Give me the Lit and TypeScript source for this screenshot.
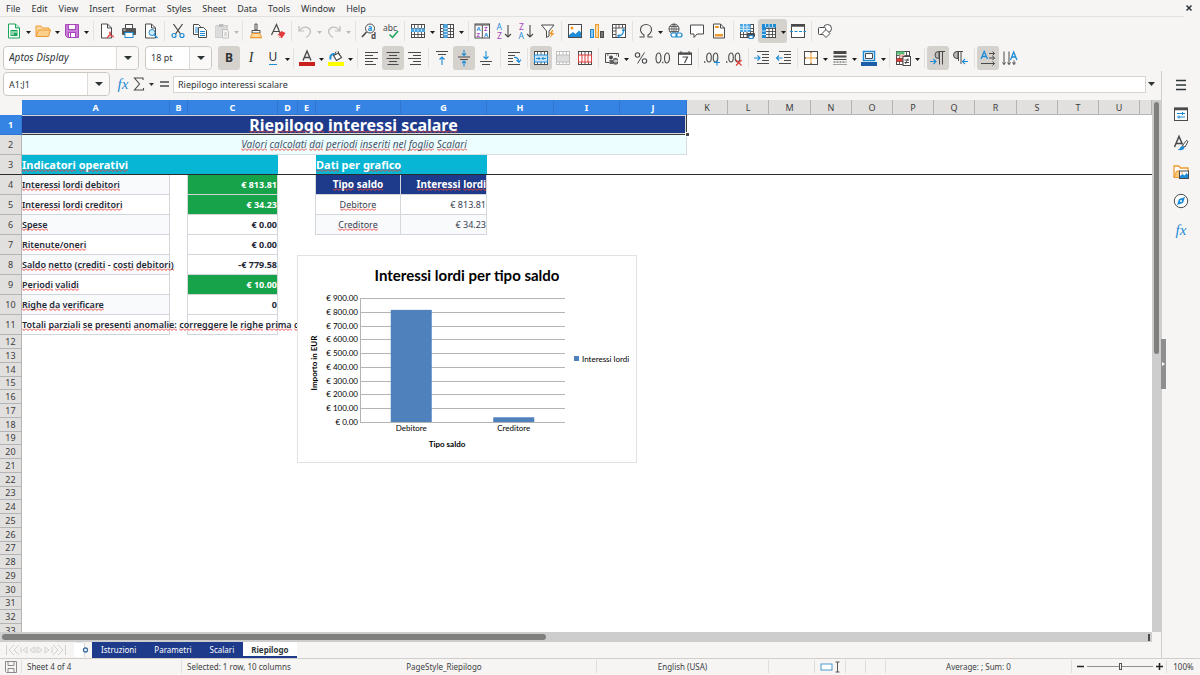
import { LitElement, html, svg, css, nothing, TemplateResult } from "lit";
import { customElement, property } from "lit/decorators.js";
import { classMap } from "lit/directives/class-map.js";

const K = "#4a4a4a";
const B = "#1e8bd6";
const G = "#18a558";
const O = "#ee9a2e";
const P = "#a845bd";
const R = "#e23b3b";
const L = "#bdbdbd";

const lines = (xs: string, color = K, width = 1) =>
  svg`<path d=${xs} fill="none" stroke=${color} stroke-width=${width} />`;

const grid = (color = K) => svg`
  <rect x="1.5" y="1.5" width="13" height="13" fill="#fff" stroke=${color} />
  <path d="M1.5 5.5h13M1.5 8.5h13M1.5 11.5h13M4.5 1.5v13M8 1.5v13M11.5 1.5v13" fill="none" stroke=${color} stroke-width=".9" />`;

const glyph = (t: string, x: number, y: number, size: number, color = K, weight = 400, family = "Noto Sans") =>
  svg`<text x=${x} y=${y} font-size=${size} fill=${color} font-weight=${weight} font-family=${family}>${t}</text>`;

const icons: Record<string, TemplateResult | unknown> = {
  new: svg`<path d="M2.5 1h7l4 4v10h-11z" fill="#fff" stroke=${G}/><path d="M9.5 1v4h4" fill="#bfe8cd" stroke=${G}/>
    <rect x="4.5" y="7" width="7" height="6" fill=${G}/><path d="M5 9h6M5 11h3" stroke="#fff"/>`,
  open: svg`<path d="M1 13V3h5l1.5 2H14v2" fill="#fbd9a0" stroke=${O}/><path d="M1 13.5 3.5 7H15.5L13.5 13.5z" fill="#fbd08c" stroke=${O}/>`,
  save: svg`<path d="M1.5 1.5h13v13h-11l-2-2z" fill="#c77fd6" stroke=${P}/><rect x="4.5" y="1.5" width="7" height="5" fill="#fff" stroke=${P}/>
    <rect x="4.5" y="9.5" width="7" height="5" fill="#fff" stroke=${P}/><path d="M6.500 10v4" stroke=${P}/>`,
  pdf: svg`<path d="M2.500 1h6l4 4v10h-10z" fill="#fff" stroke=${K}/><path d="M8.500 1v4h4" fill="none" stroke=${K}/>
    <path d="M8 15c2-2 3-4 3-6.500M11 9c0 3 1.500 5 4 5M8.500 13.500c2-1 4-1 6-.5" fill="none" stroke=${R}/>`,
  print: svg`<rect x="4.500" y="1.500" width="7" height="4" fill="#fff" stroke=${K}/><rect x="1" y="5" width="14" height="7" rx="1" fill="#555"/>
    <rect x="2.500" y="6.500" width="2" height="1" fill="#fff"/><rect x="4" y="9.500" width="8" height="5" fill="#fff" stroke=${B}/>`,
  preview: svg`<path d="M2.500 1h6l4 4v10h-10z" fill="#fff" stroke=${K}/><path d="M8.500 1v4h4" fill="none" stroke=${K}/>
    <circle cx="9" cy="9.500" r="3" fill="#d3eafa" stroke=${B}/><path d="m11.200 11.700 3.300 3.300" stroke=${B} stroke-width="1.400"/>`,
  cut: svg`<path d="M3.500 1 10.500 11M12.500 1 5.500 11" stroke=${K} stroke-width="1.300" fill="none"/>
    <circle cx="4" cy="12.500" r="2" fill="none" stroke=${B} stroke-width="1.200"/><circle cx="12" cy="12.500" r="2" fill="none" stroke=${B} stroke-width="1.200"/>`,
  copy: svg`<path d="M1.500 1.500h5l2 2v8h-7z" fill="#fff" stroke=${K}/><path d="M3 5h3M3 7h3M3 9h3" stroke=${B}/>
    <path d="M6.500 4.500h5l3 3v7h-8z" fill="#fff" stroke=${K}/><path d="M8 8.500h5M8 10.500h5M8 12.500h5" stroke=${B}/>`,
  paste: svg`<path d="M2 2.500h11v5M2 2.500v12h5" fill="none" stroke=${L} stroke-width="1.200"/><rect x="2" y="2.500" width="10" height="12" fill="#dcdcdc"/>
    <rect x="5" y="1" width="4.500" height="3" fill=${L}/><path d="M8.500 6.500h4l2 2v6.500h-6z" fill="#f6f5f4" stroke=${L}/><path d="M10 10h3M10 12h3" stroke=${L}/>`,
  brush: svg`<path d="M7 1h2v6H7z" fill="#fff" stroke=${K}/><path d="M4 7.500h8v2.500H4z" fill="#fff" stroke=${K}/>
    <path d="M4 10.500 2.500 14.500h11L12 10.500z" fill="#fbd9a0" stroke=${O}/><path d="M2 14.800h12" stroke=${O}/>`,
  clear: svg`<path d="M1.500 12 6.500 1.500 10 10M3 8.500h6" fill="none" stroke=${K} stroke-width="1.200"/>
    <path d="m7.500 12 4-4 4 2-3.500 5h-2z" fill=${R}/><path d="m8 12 3 2.500" stroke="#fff"/>`,
  undo: lines("M2 3v5h5M2.500 7.500C5 3.500 10 3 12.500 6S12 13 9 14.500", L, 1.2),
  redo: lines("M14 3v5H9M13.500 7.500C11 3.500 6 3 3.500 6S4 13 7 14.500", L, 1.2),
  find: svg`<circle cx="9" cy="5.500" r="4.500" fill="#fff" stroke=${K}/><path d="M5.500 9 1 14" stroke=${K} stroke-width="1.600"/>
    ${glyph("a", 6.5, 8, 8, B, 700)}${glyph("d", 10, 15.5, 8, K, 700)}`,
  spell: svg`${glyph("abc", 0, 7.500, 8.500)}<path d="m6.500 11.500 3 3L15 8" fill="none" stroke=${G} stroke-width="1.500"/>`,
  row: svg`${grid()}<rect x="1" y="5.500" width="14" height="3.500" fill="#4ba6e3"/><path d="M4.500 5.500v3M8 5.500v3M11.500 5.500v3" stroke="#bfe0f6"/>`,
  col: svg`${grid()}<rect x="4.500" y="1" width="4" height="14" fill="#4ba6e3"/><path d="M4.500 5.500h4M4.500 8.500h4M4.500 11.500h4" stroke="#bfe0f6"/>`,
  sort: svg`<rect x="1" y="1" width="14.500" height="14" fill="#fff" stroke=${K}/><path d="M1 2h14.500M8.300 2v13" stroke=${K}/>
    ${glyph("A", 2.500, 8, 6, B, 700)}${glyph("Z", 2.500, 14, 6, P, 700)}${glyph("Z", 10, 8, 6, P, 700)}${glyph("A", 10, 14, 6, B, 700)}`,
  az: svg`${glyph("A", 0.500, 7, 8.500, B)}${glyph("Z", 1, 15.500, 8.500, P)}${lines("M12 2v12M9 11l3 3 3-3", K, 1.1)}`,
  za: svg`${glyph("Z", 1, 7, 8.500, P)}${glyph("A", 0.500, 15.500, 8.500, B)}${lines("M12 2v12M9 11l3 3 3-3", K, 1.1)}`,
  filter: svg`<path d="M1.500 2h12.500L9 8v5l-2.500 1.500V8z" fill="#fff" stroke=${K}/><path d="m12 7-3 4.500h2.500L9.500 15.500 14.500 10H12L13.500 7z" fill=${O}/>`,
  image: svg`<rect x="1.500" y="1.500" width="13" height="13" fill="#fff" stroke=${K}/><circle cx="5" cy="5" r="1.500" fill=${O}/>
    <path d="M2 14v-2l4-3 2.500 2L12 7.500l2 2V14z" fill=${B}/>`,
  chart: svg`<rect x="1.500" y="6.500" width="3" height="8" fill="#8cc6ee" stroke=${B}/><rect x="6.500" y="1.500" width="3" height="13" fill="#fbd9a0" stroke=${O}/>
    <rect x="11.500" y="8.500" width="3" height="6" fill="#777" stroke=${K}/>`,
  pivot: svg`<rect x="1.500" y="1.500" width="13" height="13" fill="#fff" stroke=${K}/><path d="M1.500 5h13M5 1.500v13M8 1.500V5M11.500 1.500V5M1.500 8H5M1.500 11.500H5" stroke=${K} stroke-width=".9"/>
    <path d="M7 13c4 0 5.500-2 5.500-6M11 8l1.500-1.800L14 8M8.500 11.500 6.800 13l1.700 1.500" fill="none" stroke=${B} stroke-width="1.100"/>`,
  omega: lines("M1.500 14H6v-2C3.500 10.500 2.500 9 2.500 6.500 2.500 3.500 5 1.500 8 1.500s5.500 2 5.500 5c0 2.500-1 4-3.500 5.500v2h4.500", K, 1.1),
  link: svg`<circle cx="7" cy="6" r="5" fill="#fff" stroke=${K}/><path d="M2 6h10M7 1v10M3 3.500h8M3 8.500h8M7 1C4 4 4 8 7 11M7 1c3 3 3 7 0 10" fill="none" stroke=${K} stroke-width=".8"/>
    <rect x="4" y="10" width="6" height="4" rx="2" fill="#fff" stroke=${B} stroke-width="1.200"/><rect x="9" y="10" width="6" height="4" rx="2" fill="none" stroke=${B} stroke-width="1.200"/>`,
  comment: svg`<path d="M1.500 2h13v9H8l-3 3.500V11H1.500z" fill="#fff" stroke=${K}/>`,
  headfoot: svg`<path d="M2.500 1h7l4 4v10h-11z" fill="#fff" stroke=${K}/><path d="M4 3h4v2H4zM4 11h8v2.500H4z" fill=${O}/><path d="M9.500 1v4h4" fill="none" stroke=${K}/>`,
  printarea: svg`${grid()}<rect x="1" y="1" width="10.500" height="8" fill="#4ba6e3"/><path d="M1 4h10.500M1 6.500h10.500M4.500 1v8M8 1v8" stroke="#d0e8f8"/>
    <rect x="8" y="10" width="8" height="4" rx="1" fill=${K}/><rect x="10" y="12.500" width="4" height="3" fill="#fff" stroke=${B}/>`,
  freeze: svg`${grid()}<path d="M1 1h14v3.500H5V15H1z" fill=${B}/><path d="M8 1v3.500M11.500 1v3.500M1 8h4M1 11.500h4M4.500 1v3" stroke="#bfe0f6"/>`,
  split: svg`<rect x="1.500" y="1.500" width="13" height="13" fill="#fff" stroke=${K}/><path d="M1 2.500h14" stroke=${K} stroke-width="2.500"/>
    <path d="M0 8.500h16" stroke=${B} stroke-dasharray="3 1.500"/>`,
  shapes: svg`<circle cx="10.500" cy="5.500" r="4" fill="#fff" stroke=${K}/><rect x="1.500" y="4.500" width="7" height="7" rx="1" fill="#fff" stroke=${K}/>
    <path d="m9 6.500 4 4-4 4-4-4z" fill="#fff" stroke=${K}/>`,
  left: lines("M2 2.500h13M2 5.500h8M2 8.500h13M2 11.500h8M2 14.500h11"),
  center: lines("M1.500 2.500h13M4 5.500h8M1.500 8.500h13M4 11.500h8M2.500 14.500h11"),
  right: lines("M1 2.500h13M6 5.500h8M1 8.500h13M6 11.500h8M3 14.500h11"),
  top: svg`${lines("M2 1.500h12M4 4.500h8")}${lines("M8 15V7M5.500 9.500 8 7l2.500 2.500", B, 1.1)}`,
  middle: svg`${lines("M2 7h12M4 9.500h8")}${lines("M8 0v5.500M6 3.500l2 2 2-2M8 16.500V11M6 13l2-2 2 2", B, 1.1)}`,
  bottom: svg`${lines("M2 11.500h12M4 14.500h8")}${lines("M8 1v8M5.500 6.500 8 9l2.500-2.500", B, 1.1)}`,
  wrap: svg`${lines("M2 2.500h12M2 5.500h7M2 8.500h5M2 11.500h5M2 14.500h12")}${lines("M8 7.500c3-.5 4.500 1.500 5 4M10.500 10l2.500 2.500L15 9.500", B, 1.1)}`,
  merge: svg`${grid()}<rect x="1.500" y="5" width="13" height="7" fill="#c9e4f8" stroke=${B}/><path d="M3 8.500h4M13 8.500H9M5.500 7 7 8.500 5.500 10M10.500 7 9 8.500l1.500 1.500" fill="none" stroke=${B}/>`,
  mergec: svg`${grid(L)}<rect x="1.500" y="5" width="13" height="7" fill="#ddd" stroke=${L}/>`,
  unmerge: svg`${grid()}<rect x="1.500" y="5" width="13" height="7" fill="#fff" stroke=${R}/><path d="M5 5v7M8 5v7M11 5v7" stroke=${R}/>`,
  currency: svg`<path d="M1.500 3.500h13V7M1.500 3.500v9h4" fill="none" stroke=${K}/><circle cx="7" cy="7.500" r="2" fill=${K}/><path d="M3 5h1.500M12 5h1" stroke=${K}/>
    <rect x="5.500" y="10" width="3.500" height="4" fill="#666"/><rect x="9.500" y="8.500" width="4" height="5.500" rx="1" fill="#888" stroke=${K}/><path d="M9.500 11h5" stroke="#fff"/>`,
  percent: svg`<circle cx="4.500" cy="5" r="2.200" fill="none" stroke=${K} stroke-width="1.100"/><circle cx="11.500" cy="11" r="2.200" fill="none" stroke=${K} stroke-width="1.100"/><path d="M11.500 2.500 4.500 13.500" stroke=${K}/>`,
  number: svg`<ellipse cx="3.500" cy="8" rx="2.500" ry="5" fill="none" stroke=${K} stroke-width="1.100"/><ellipse cx="12" cy="8" rx="2.500" ry="5" fill="none" stroke=${K} stroke-width="1.100"/><path d="M7.200 12.500h1.200" stroke=${K} stroke-width="1.300"/>`,
  date: svg`<rect x="1.500" y="3" width="13" height="11.500" fill="#fff" stroke=${K}/><path d="M1 3.800h14" stroke=${K} stroke-width="2"/><path d="M4 1v2M12 1v2" stroke=${K}/>${lines("M5.500 7h5l-3 6", K, 1.2)}`,
  adddec: svg`<ellipse cx="5" cy="7.500" rx="2.300" ry="4.500" fill="none" stroke=${K} stroke-width="1.100"/><ellipse cx="11.500" cy="7.500" rx="2.300" ry="4.500" fill="none" stroke=${K} stroke-width="1.100"/><path d="M0 12h1.400" stroke=${K} stroke-width="1.300"/><path d="M13 9.500v6M10 12.500h6" stroke=${B} stroke-width="1.200"/>`,
  deldec: svg`<ellipse cx="5" cy="7.500" rx="2.300" ry="4.500" fill="none" stroke=${K} stroke-width="1.100"/><ellipse cx="11.500" cy="7.500" rx="2.300" ry="4.500" fill="none" stroke=${K} stroke-width="1.100"/><path d="M0 12h1.400" stroke=${K} stroke-width="1.300"/><path d="m10 10 5.500 5.500M15.500 10 10 15.500" stroke=${R} stroke-width="1.200"/>`,
  indent: svg`${lines("M3 1.500h12M8 4.500h7M8 7.500h7M8 10.500h7M3 13.500h12")}${lines("M0 8h6M3.500 5.500 6 8l-2.500 2.500", B, 1.1)}`,
  outdent: svg`${lines("M3 1.500h12M8 4.500h7M8 7.500h7M8 10.500h7M3 13.500h12")}${lines("M6.500 8h-6M3 5.500.5 8 3 10.500", B, 1.1)}`,
  borders: svg`<rect x="1.500" y="1.500" width="13" height="13" fill="#fff" stroke=${K}/><path d="M8 2v12M2 8h12" stroke=${O}/><path d="M8 1v2M8 13v2M1 8h2M13 8h2" stroke=${K}/>`,
  linestyle: svg`<path d="M1.500 2.500h13" stroke=${K} stroke-width="3"/><path d="M1.500 6.500h13" stroke=${K} stroke-width="2"/><path d="M1.500 9.500h13" stroke=${K}/><path d="M1.500 12h13" stroke=${K} stroke-dasharray="2 1"/><path d="M1.500 14.500h13" stroke=${K} stroke-dasharray="1 1"/>`,
  bordercolor: svg`<rect x="2.500" y="1.500" width="11" height="9" fill="#fff" stroke=${B} stroke-width="1.500"/><path d="M4.500 3.500h7v5h-7z" fill="none" stroke=${K}/><rect x="0" y="12" width="16" height="4" fill="#1b5fa6"/>`,
  cond: svg`${grid()}<path d="M1.500 1.500h8v3h-8z" fill="#57c27a"/><path d="M1.500 8.500h6v3h-6z" fill=${R}/><path d="M4.500 4.500h5v3h-5z" fill="#f3b3a8"/><rect x="8" y="6.500" width="7.500" height="9" fill="#fff" stroke=${K}/><path d="M9.500 10h4.500M9.500 12.500h4.500M13 8.500l-2.500 5.500" stroke=${K}/>`,
  ltr: svg`<path d="M15 1.500H8.500a3.500 3.500 0 0 0 0 7H9V1.500" fill="#b9b9b9" stroke=${K}/><path d="M9.500 1.500v13M12.500 1.500v13" stroke=${K}/>${lines("M0 11.500h6M3.500 9 6 11.500 3.500 14", B, 1.1)}`,
  rtl: svg`<path d="M11 1.500H5a3.500 3.500 0 0 0 0 7h1V1.500" fill="#b9b9b9" stroke=${K}/><path d="M6.500 1.500v9.500M9 1.500V14" stroke=${K}/>${lines("M16 11.500h-5.500M13 9l-2.500 2.500L13 14", B, 1.1)}`,
  horiz: svg`${lines("M1 9 4.200 1.500 7.500 9M2.200 6.500h4", B, 1.3)}${lines("M9 3.500h5.500M12.500 1.500l2 2-2 2M9 8h5.500M12.500 6l2 2-2 2M1 13.500h13.500M12.500 11.500l2 2-2 2")}`,
  vert: svg`${lines("M8.500 10 11.700 2l3.200 8M9.700 7h4", B, 1.3)}${lines("M2 1.500v13M.5 12.500l1.500 2 1.500-2M7 1.500v13M5.500 12.500l1.500 2 1.500-2M12 10.500v4M10.500 12.500l1.500 2 1.500-2")}`,
  fontcolor: svg`${lines("M4 10.500 8 1l4 9.500M5.200 7.500h5.600", K, 1.4)}<rect x="0" y="12" width="16" height="4" fill="#c9211e"/>`,
  fill: svg`<path d="m5.500 5.500 5-2.500 3 4.500-5 3z" fill="#fff" stroke=${K} stroke-width="1.200"/><path d="M10 1 11.500 5.500M8 1.500 6.500 5" stroke=${K}/><path d="M2.500 9.500C2 6 3 3.500 6.500 4" fill="none" stroke=${B} stroke-width="2"/><rect x="0" y="12" width="16" height="4" fill="#ffff00"/>`,
  sigma: lines("M12 4V2H3.500L8.500 8l-5 6H12.500v-2", K, 1.1),
  equals: lines("M4 6h9M4 10h9", K, 1.5),
  burger: lines("M3 3.500h10M3 8h10M3 12.500h10", "#2e3436", 1.6),
  props: svg`<rect x="1.500" y="2" width="13" height="12.500" fill="#fff" stroke=${K}/><path d="M1 3h14" stroke=${K} stroke-width="2.500"/>${lines("M4 7.500h8M9.500 6v3M4 11h8M6 9.500v3", B, 1.1)}`,
  styles: svg`${lines("M1.500 12 6 1.500 9.500 9.500M3 8.500h6", K, 1.5)}<path d="m9.500 10.500 4-5 1.500 1-3 5.500z" fill="#fff" stroke=${K}/><path d="M4.500 14.500c3 0 2-3 5-3.500l2 1.500c-.5 2.500-4 3.500-7 2z" fill=${B}/>`,
  gallery: svg`<path d="M1 13.500V2h5l1.500 2H15v3" fill="#fff" stroke=${O} stroke-width="1.300"/><path d="M1 13.500 3.500 7H7v6.500z" fill="#f9c77c" stroke=${O}/><rect x="6.500" y="7" width="9" height="7.500" fill="#fff" stroke=${K}/><path d="M7 14v-2l2.500-2 2 1.500L13.500 9l1.500 1.500V14z" fill=${B}/><circle cx="9" cy="9" r=".8" fill=${O}/>`,
  nav: svg`<circle cx="8" cy="8" r="6.700" fill="#fff" stroke=${K}/><path d="m12 4-2 6-6 2 2-6z" fill=${B}/><circle cx="8" cy="8" r="1" fill="#fff"/>`,
  docmod: svg`<path d="M2.500 2.500h11v11h-10l-1-1z" fill="none" stroke="#8a8a8a"/><path d="M5 2.500v4h6v-4M5 13.500v-4h6v4" fill="none" stroke="#8a8a8a"/>`,
  selmode: svg`<rect x="1" y="4" width="11" height="6" fill="#fff" stroke="#4a98cf"/>${lines("M15.500 2h4M17.500 2v10M15.500 12h4", "#555")}`,
  addtab: svg`<path d="M2.500 0h8v14" fill="#fff" stroke="#d8d8d8"/><path d="M0 0h10v14H0z" fill="#fff"/><circle cx="11.500" cy="7" r="2" fill="#fff" stroke="#3a6ea5" stroke-width="1.300"/>`,
};

const icon = (name: string, w = 16, h = 16) =>
  html`<svg width=${w} height=${h} viewBox="0 0 ${w} ${h}" aria-hidden="true">${icons[name]}</svg>`;

const caret = (w = 5, h = 3) =>
  html`<svg class="caret" width=${w} height=${h} viewBox="0 0 ${w} ${h}" aria-hidden="true"><path d="M0 0h${w}L${w / 2} ${h}z" fill="currentColor" /></svg>`;

const chrome = css`
  * { box-sizing: border-box; }
  button, input { font: inherit; color: inherit; border: 0; background: none; padding: 0; margin: 0; min-width: 0; }
  svg { display: block; overflow: visible; flex: none; }
`;

type Item = [name: string, label: string, flag?: "on" | "drop" | "ondrop" | "off" | "offdrop"] | "|" | "||";

const standardBar: Item[] = [
  ["new", "New", "drop"], ["open", "Open", "drop"], ["save", "Save", "drop"], "||",
  ["pdf", "Export as PDF"], ["print", "Print"], ["preview", "Print preview"], "|",
  ["cut", "Cut"], ["copy", "Copy"], ["paste", "Paste", "offdrop"], "|",
  ["brush", "Clone formatting"], ["clear", "Clear formatting"], "|",
  ["undo", "Undo", "offdrop"], ["redo", "Redo", "offdrop"], "||",
  ["find", "Find and replace"], ["spell", "Spelling"], "|",
  ["row", "Row", "drop"], ["col", "Column", "drop"], "||",
  ["sort", "Sort"], ["az", "Sort ascending"], ["za", "Sort descending"], ["filter", "AutoFilter"], "|",
  ["image", "Insert image"], ["chart", "Insert chart"], ["pivot", "Pivot table"], "|",
  ["omega", "Special character", "drop"], ["link", "Hyperlink"], ["comment", "Comment"], ["headfoot", "Headers and footers"], "||",
  ["printarea", "Print area"], ["freeze", "Freeze rows and columns", "ondrop"], ["split", "Split window"], "|",
  ["shapes", "Draw functions"],
];

const formatBar: Item[] = [
  ["bold", "Bold", "on"], ["italic", "Italic"], ["underline", "Underline", "drop"], "|",
  ["fontcolor", "Font color", "drop"], ["fill", "Background color", "drop"], "||",
  ["left", "Align left"], ["center", "Align center", "on"], ["right", "Align right"], "|",
  ["top", "Align top"], ["middle", "Center vertically", "on"], ["bottom", "Align bottom"], "||",
  ["wrap", "Wrap text"], "|",
  ["merge", "Merge and center", "on"], ["mergec", "Merge cells", "off"], ["unmerge", "Unmerge cells"], "|",
  ["currency", "Currency", "drop"], ["percent", "Percent"], ["number", "Number"], ["date", "Date"], "|",
  ["adddec", "Add decimal place"], ["deldec", "Delete decimal place"], "||",
  ["indent", "Increase indent"], ["outdent", "Decrease indent"], "|",
  ["borders", "Borders", "drop"], ["linestyle", "Border style", "drop"], ["bordercolor", "Border color", "drop"], "|",
  ["cond", "Conditional formatting", "drop"], "||",
  ["ltr", "Left-to-right", "on"], ["rtl", "Right-to-left"], "||",
  ["horiz", "Text direction left to right", "on"], ["vert", "Text direction top to bottom"],
];

@customElement("tool-strip")
class ToolStrip extends LitElement {
  @property({ attribute: false }) items: Item[] = [];
  static styles = [chrome, css`
    :host { display: flex; align-items: center; color: #2e3436; }
    .sep { width: 5px; height: 20px; flex: none; display: flex; justify-content: center; }
    .sep::before { content: ""; width: 1px; background: #e4e2e0; }
    .wide { width: 6px; }
    .grp { display: flex; border-radius: 3px; flex: none; }
    .on { background: #d5d1cd; }
    .btn { width: 22px; height: 24px; display: grid; place-items: center; }
    .drop { width: 7px; height: 24px; display: grid; place-items: center; padding-top: 3px; color: #1c1c1c; }
    .off .drop { color: #bbb; }
    .letter { font: 700 12px/16px "Noto Sans", sans-serif; }
    .italic { font: italic 400 14px/16px "Liberation Serif", serif; }
    .underline { font: 400 12px/14px "Noto Sans", sans-serif; border-bottom: 1px solid #1e8bd6; }
  `];
  face(name: string) {
    if (name === "bold") return html`<span class="letter">B</span>`;
    if (name === "italic") return html`<span class="italic">I</span>`;
    if (name === "underline") return html`<span class="underline">U</span>`;
    return icon(name);
  }
  render() {
    return this.items.map((it) => {
      if (it === "|" || it === "||") return html`<span class=${classMap({ sep: true, wide: it === "||" })}></span>`;
      const [name, label, flag = ""] = it;
      return html`<span class=${classMap({ grp: true, on: flag.startsWith("on"), off: flag.startsWith("off") })}>
        <button class="btn" aria-label=${label}>${this.face(name)}</button>
        ${flag.endsWith("drop") ? html`<button class="drop" aria-label="${label} options">${caret()}</button>` : nothing}
      </span>`;
    });
  }
}

const unmarked = new Set(["per", "-"]);
const spell = (text: string) =>
  text.split(" ").map((w, i) => html`${i ? " " : ""}${unmarked.has(w) ? w : html`<span class="sp">${w}</span>`}`);

const columns: [string, number][] = [
  ["A", 148], ["B", 18], ["C", 90], ["D", 20], ["E", 18], ["F", 85], ["G", 86], ["H", 67], ["I", 66], ["J", 67],
  ["K", 41], ["L", 41], ["M", 42], ["N", 41], ["O", 41], ["P", 41], ["Q", 41], ["R", 42], ["S", 41], ["T", 41], ["U", 41],
];

const indicators: [string, string, boolean][] = [
  ["Interessi lordi debitori", "€ 813.81", true],
  ["Interessi lordi creditori", "€ 34.23", true],
  ["Spese", "€ 0.00", false],
  ["Ritenute/oneri", "€ 0.00", false],
  ["Saldo netto (crediti - costi debitori)", "-€ 779.58", false],
  ["Periodi validi", "€ 10.00", true],
  ["Righe da verificare", "0", false],
  ["Totali parziali se presenti anomalie: correggere le righe prima d", "", false],
];

const balances: [string, number][] = [["Debitore", 813.81], ["Creditore", 34.23]];

@customElement("balance-chart")
class BalanceChart extends LitElement {
  static styles = [chrome, css`
    :host { display: block; background: #fff; border: 1px solid #e2e2e2; }
    text { font-family: Lato, Carlito, sans-serif; font-size: 8px; fill: #000; }
    .title { font-size: 15px; font-weight: 700; }
    .axis { font-weight: 700; }
    .end { text-anchor: end; }
    .mid { text-anchor: middle; }
    .rule { stroke: #b3b3b3; stroke-width: 1; }
    .bar { fill: #4f81bd; }
  `];
  render() {
    const left = 62, right = 267, top = 42, bottom = 166, max = 900;
    const y = (v: number) => bottom - ((bottom - top) * v) / max;
    const slot = (right - left) / balances.length;
    return html`<svg width="338" height="206" viewBox="0 0 338 206" role="img" aria-label="Interessi lordi per tipo saldo">
      <text class="title mid" x="169" y="25">Interessi lordi per tipo saldo</text>
      ${Array.from({ length: 10 }, (_, i) => i * 100).map((v) => svg`
        <line class="rule" x1=${left} x2=${right} y1=${Math.round(y(v)) + 0.5} y2=${Math.round(y(v)) + 0.5} />
        <text class="end" x=${left - 2} y=${Math.round(y(v)) + 3}>€ ${v.toFixed(2)}</text>`)}
      <line class="rule" x1=${left + 0.5} x2=${left + 0.5} y1=${top} y2=${bottom} />
      ${balances.map(([name, v], i) => svg`
        <rect class="bar" x=${left + slot * (i + 0.3)} width=${slot * 0.4} y=${y(v)} height=${bottom - y(v)} />
        <text class="mid" x=${left + slot * (i + 0.5)} y="175">${name}</text>`)}
      <text class="axis mid" x="149" y="191">Tipo saldo</text>
      <text class="axis mid" transform="translate(19 107) rotate(-90)">Importo in EUR</text>
      <rect class="bar" x="276" y="100" width="5" height="5" />
      <text x="284" y="106">Interessi lordi</text>
    </svg>`;
  }
}

@customElement("calc-sheet")
class CalcSheet extends LitElement {
  static styles = [chrome, css`
    :host { display: block; position: relative; overflow: hidden; background: #fff; font-size: 9px; line-height: 13px; color: #1f2937; }
    table { table-layout: fixed; width: 100%; border-spacing: 0; }
    th, td { padding: 0; white-space: nowrap; text-align: left; }
    th { font-weight: 400; text-align: center; color: #3d3d3d; background: #e1e0df; border: 0 solid #b4b4b4; border-width: 0 1px 1px 0; }
    thead th { height: 15px; line-height: 13px; }
    thead .corner { background: #f6f5f4; border-color: #f6f5f4; }
    .sel { background: #3584e4; color: #fff; font-weight: 700; border-color: #2f76cc; }
    .tall th, .tall td { height: 20px; }
    .short th { height: 14px; line-height: 12px; }
    .short:nth-child(4n) th { height: 13px; }
    .sp { background: url("data:image/svg+xml,%3Csvg xmlns='http://www.w3.org/2000/svg' width='4' height='3'%3E%3Cpath d='M0 .5 2 2.500 4 .5' fill='none' stroke='%23e8453c'/%3E%3C/svg%3E") repeat-x left bottom; }
    .title { background: #1e3a8a; color: #fff; font-size: 16px; font-weight: 700; text-align: center; border-bottom: 1px solid #3c3c3c; border-right: 1px solid #3c3c3c; }
    .title .sp { background-position: left calc(100% - 3px); }
    .clip { height: 19px; line-height: 19px; overflow: hidden; border: solid #d6d6d6; border-width: 1px 1px 1px 0; }
    .sub { background: #ecfeff; color: #475569; font-size: 10px; font-style: italic; text-align: center; border: 0 solid #d5dde3; border-width: 0 1px 1px 0; }
    .sec { background: #06b6d4; color: #fff; font-size: 11px; font-weight: 700; }
    .frozen td, .frozen th { border-bottom: 1px solid #2b2b2b; }
    .cell { border: 0 solid #d3d7dc; border-width: 0 1px 1px 0; font-weight: 700; }
    .label { font-weight: 600; }
    .alt { background: #f8fafc; }
    .num { text-align: right; }
    .edge { border-right: 1px solid #d3d7dc; }
    .good { background: #16a34a; color: #fff; }
    .head { background: #1e3a8a; color: #fff; text-align: center; font-size: 10px; }
    .head.num { text-align: right; }
    .plain { font-weight: 400; color: #374151; }
    .mid { text-align: center; }
    .handle { position: absolute; left: 685px; top: 32px; background: #4a4a4a; border: 1px solid #fff; box-sizing: content-box; width: 3px; height: 3px; }
    .chart { position: absolute; left: 297px; top: 155px; }
  `];
  side(i: number) {
    if (i === 0) return html`<td class="cell head">${spell("Tipo saldo")}</td><td class="cell head num">${spell("Interessi lordi")}</td>`;
    const b = balances[i - 1];
    if (!b) return html`<td colspan="2"></td>`;
    const alt = i === 2;
    return html`<td class=${classMap({ cell: true, plain: true, mid: true, alt })}>${spell(b[0])}</td>
      <td class=${classMap({ cell: true, plain: true, num: true, alt })}>€ ${b[1].toFixed(2)}</td>`;
  }
  render() {
    return html`<table>
      <colgroup><col style="width:22px" />${columns.map(([, w]) => html`<col style="width:${w}px" />`)}<col /></colgroup>
      <thead><tr><th class="corner"></th>${columns.map(([n], i) => html`<th class=${i < 10 ? "sel" : ""} scope="col">${n}</th>`)}<th></th></tr></thead>
      <tbody>
        <tr class="tall"><th class="sel" scope="row">1</th><td class="title" colspan="10"><div class="clip">${spell("Riepilogo interessi scalare")}</div></td></tr>
        <tr class="tall"><th scope="row">2</th><td class="sub" colspan="10">${spell("Valori calcolati dai periodi inseriti nel foglio Scalari")}</td></tr>
        <tr class="tall frozen"><th scope="row">3</th><td class="sec" colspan="3">${spell("Indicatori operativi")}</td><td colspan="2"></td>
          <td class="sec" colspan="2">${spell("Dati per grafico")}</td><td colspan="15"></td></tr>
        ${indicators.map(([name, value, good], i) => html`<tr class="tall"><th scope="row">${i + 4}</th>
          <td class=${classMap({ cell: true, label: true, alt: i % 2 === 0 })}>${spell(name)}</td><td class="edge"></td>
          <td class=${classMap({ cell: true, num: true, good })}>${value}</td><td></td><td class=${i < 3 ? "edge" : ""}></td>${this.side(i)}</tr>`)}
      </tbody>
      <tbody>
        ${Array.from({ length: 22 }, (_, i) => html`<tr class="short"><th scope="row">${i + 12}</th></tr>`)}
      </tbody>
    </table>
    <span class="handle"></span>
    <balance-chart class="chart"></balance-chart>`;
  }
}

@customElement("app-root")
class AppRoot extends LitElement {
  static styles = [chrome, css`
    :host { display: flex; flex-direction: column; height: 100vh; overflow: hidden; background: #f6f5f4; color: #2e3436; font-family: "Noto Sans", sans-serif; font-size: 9px; line-height: 13px; }
    .menu { display: flex; align-items: center; height: 17px; padding-left: 6px; margin-right: 16px; border-bottom: 1px solid #e3e1df; }
    .menu .close { margin-left: auto; margin-right: -8px; }
    .mi { margin-right: 11px; }
    .strip { display: flex; height: 27px; align-items: center; padding-left: 3px; }
    .combo { display: flex; height: 24px; background: #fff; border: 1px solid #cdc7c2; border-radius: 4px; margin-right: 6px; }
    .combo input { flex: 1; padding-left: 5px; }
    .combo button { width: 22px; border-left: 1px solid #dedad7; display: grid; place-items: center; background: #faf9f8; border-radius: 0 4px 4px 0; }
    .font { width: 136px; font-size: 10px; font-style: italic; }
    .size { width: 67px; }
    .name { width: 107px; margin-right: 4px; }
    .mid { display: flex; flex: 1; min-height: 0; }
    .left { flex: 1; min-width: 0; display: flex; flex-direction: column; }
    .formula { display: flex; align-items: center; height: 29px; padding: 0 4px 3px 3px; }
    .fx { font: italic 15px/16px "Liberation Serif", serif; color: #1e8bd6; width: 16px; }
    .formula .ib { display: grid; place-items: center; height: 20px; }
    .fxb { width: 16px; margin-left: 1px; } .sg { width: 16px; } .dd { width: 8px; } .eq { width: 16px; margin: 0 1px; }
    .line { flex: 1; height: 17px; background: #fff; border: 1px solid #d6d3d0; padding-left: 4px; }
    .expand { width: 11px; }
    .body { display: flex; flex: 1; min-height: 0; }
    calc-sheet { flex: 1; }
    .vs { width: 9px; background: #cdcdcd; padding: 2px 2px 0; }
    .vt { height: 252px; border-radius: 3px; background: #7f7f7d; }
    .hs { height: 10px; background: #cdcdcd; margin-right: 9px; padding: 2px; display: flex; justify-content: space-between; }
    .ht { width: 544px; height: 6px; border-radius: 3px; background: #7f7f7d; }
    .tick { width: 2px; height: 7px; background: #4a4a4a; }
    .tabs { display: flex; height: 16px; font-size: 8px; }
    .navs { width: 70px; display: flex; align-items: center; padding-left: 5px; color: #d2d0ce; }
    .add { width: 22px; padding: 0 0 0 4px; }
    .tab { background: #1e3a8a; color: #fff; padding: 0 9px 1px; }
    .cur { background: #fff; color: #2e3436; font-weight: 700; border-bottom: 2px solid #1e3a8a; padding: 0 8px; }
    .side { position: relative; width: 39px; border-left: 1px solid #cfccc9; display: flex; flex-direction: column; align-items: center; padding: 2px 0 0; gap: 5px; }
    .side button { width: 24px; height: 24px; display: grid; place-items: center; }
    .grip { position: absolute; left: -1px; top: 268px; width: 5px; height: 50px; background: #8f8f8f; display: grid; place-items: center; color: #fff; }
    .status { display: flex; height: 17px; border-top: 1px solid #d0cdca; align-items: center; font-size: 8px; line-height: 11px; color: #3d4143; padding-bottom: 1px; }
    .st { height: 13px; border-right: 1px solid #e0dedc; text-align: center; flex: none; white-space: nowrap; display: flex; align-items: center; justify-content: center; }
    .st.start { justify-content: flex-start; padding-left: 5px; }
    .w22 { width: 22px; } .w159 { width: 160px; } .w109 { width: 110px; border: 0; } .w172 { width: 172px; } .w46 { width: 46px; } .w31 { width: 31px; }
    .w20 { width: 20px; } .w186 { width: 186px; } .w95 { width: 95px; } .w33 { width: 33px; border: 0; } .grow { flex: 1; }
    .w95 { gap: 3px; padding-left: 2px; }
    input[type="range"] { appearance: none; width: 66px; height: 9px; }
    input[type="range"]::-webkit-slider-runnable-track { height: 1px; background: #8e8e8e; }
    input[type="range"]::-webkit-slider-thumb { appearance: none; width: 3px; height: 7px; margin-top: -3px; background: #f6f5f4; border: 1px solid #555; }
  `];
  render() {
    const menus = ["File", "Edit", "View", "Insert", "Format", "Styles", "Sheet", "Data", "Tools", "Window", "Help"];
    return html`
      <nav class="menu">${menus.map((m) => html`<button class="mi">${m}</button>`)}
        <button class="close" aria-label="Close document"><svg width="6" height="6" viewBox="0 0 6 6"><path d="m.5.5 5 5M5.500.5l-5 5" stroke="#2e3436" stroke-width="1.500"/></svg></button>
      </nav>
      <div class="strip"><tool-strip .items=${standardBar}></tool-strip></div>
      <div class="strip">
        <div class="combo font"><input aria-label="Font name" .value=${"Aptos Display"} /><button aria-label="Font list">${caret(8, 4)}</button></div>
        <div class="combo size"><input aria-label="Font size" .value=${"18 pt"} /><button aria-label="Size list">${caret(8, 4)}</button></div>
        <tool-strip .items=${formatBar}></tool-strip>
      </div>
      <div class="mid">
        <div class="left">
          <div class="formula">
            <div class="combo name"><input aria-label="Name box" .value=${"A1:J1"} /><button aria-label="Name list">${caret(8, 4)}</button></div>
            <button class="ib fxb" aria-label="Function wizard"><span class="fx">fx</span></button>
            <button class="ib sg" aria-label="Select function">${icon("sigma")}</button>
            <button class="ib dd" aria-label="Function list">${caret()}</button>
            <button class="ib eq" aria-label="Formula">${icon("equals")}</button>
            <input class="line" aria-label="Input line" .value=${"Riepilogo interessi scalare"} />
            <button class="ib expand" aria-label="Expand formula bar">${caret(7, 4)}</button>
          </div>
          <div class="body"><calc-sheet></calc-sheet><div class="vs"><div class="vt"></div></div></div>
          <div class="hs"><div class="ht"></div><div class="tick"></div></div>
          <div class="tabs">
            <div class="navs"><svg width="62" height="12" viewBox="0 0 62 12" fill="none" stroke="currentColor"><path d="M1.500 1v10M9 1 4 6l5 5M14 1 9 6l5 5M16 3v6M22 3l-4 3 4 3zM29 3l-4 3 4 3zM31 3v6M33 3l4 3-4 3zM40 3l4 3-4 3zM47 3v6M48 1l5 5-5 5M53 1l5 5-5 5M60.500 1v10"/></svg></div>
            <button class="add" aria-label="Add sheet">${icon("addtab", 14, 14)}</button>
            ${["Istruzioni", "Parametri", "Scalari"].map((t) => html`<button class="tab">${t}</button>`)}
            <button class="tab cur" aria-current="true">Riepilogo</button>
          </div>
        </div>
        <aside class="side">
          <button aria-label="Sidebar settings">${icon("burger")}</button>
          <button aria-label="Properties">${icon("props")}</button>
          <button aria-label="Styles">${icon("styles")}</button>
          <button aria-label="Gallery">${icon("gallery")}</button>
          <button aria-label="Navigator">${icon("nav")}</button>
          <button aria-label="Functions"><span class="fx">fx</span></button>
          <span class="grip"><svg width="3" height="4" viewBox="0 0 3 4"><path d="M0 0v4l3-2z" fill="currentColor"/></svg></span>
        </aside>
      </div>
      <footer class="status">
        <span class="st w22">${icon("docmod")}</span>
        <span class="st start w159">Sheet 4 of 4</span>
        <span class="st start w109">Selected: 1 row, 10 columns</span>
        <span class="st grow">PageStyle_Riepilogo</span>
        <span class="st w172">English (USA)</span>
        <span class="st w46"></span>
        <span class="st w31">${icon("selmode", 20, 14)}</span>
        <span class="st w20"></span><span class="st w20"></span>
        <span class="st w186">Average: ; Sum: 0</span>
        <span class="st w95"><svg width="7" height="7" viewBox="0 0 7 7"><path d="M0 3.500h7" stroke="#222" stroke-width="1.500"/></svg>
          <input type="range" min="0" max="200" .value=${"100"} aria-label="Zoom" />
          <svg width="7" height="7" viewBox="0 0 7 7"><path d="M0 3.500h7M3.500 0v7" stroke="#222" stroke-width="1.500"/></svg></span>
        <span class="st w33">100%</span>
      </footer>`;
  }
}
